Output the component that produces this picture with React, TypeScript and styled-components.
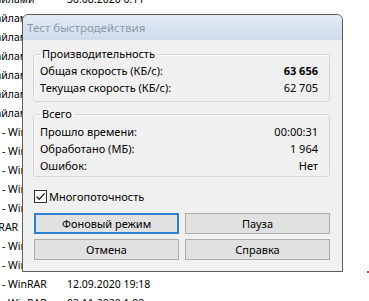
import React from "react";
import styled, { createGlobalStyle } from "styled-components";

const GlobalStyle = createGlobalStyle`
    html, body {
        margin: 0;
        padding: 0;
        background: #fff;
    }
    body {
        width: 369px;
        height: 301px;
        overflow: hidden;
    }
`;

const Desktop = styled.div`
    position: relative;
    width: 369px;
    height: 301px;
    overflow: hidden;
    background: #fff;
    font-family: "Noto Sans", "Segoe UI", sans-serif;
`;

const FileList = styled.div`
    margin-top: -10px;
    margin-left: -54px;
    font-size: 10.5px;
    line-height: 19px;
    color: #000;
`;

const FileRow = styled.div`
    display: grid;
    grid-template-columns: 121px auto;
    white-space: nowrap;
`;

const Mark = styled.span`
    position: absolute;
    left: 367px;
    top: 271px;
    width: 2px;
    height: 2px;
    background: #d04040;
`;

const Window = styled.div`
    position: absolute;
    left: 22px;
    top: 14px;
    width: 321px;
    height: 258px;
    box-sizing: border-box;
    border: 1px solid #5c5c5c;
    border-radius: 6px 6px 0 0;
    background: #f0f0f0;
    display: flex;
    flex-direction: column;
    overflow: hidden;
    font-size: 11px;
    color: #000;
`;

const TitleBar = styled.div`
    height: 25px;
    flex: none;
    padding-left: 4px;
    line-height: 26px;
    font-size: 11.5px;
    color: #8e9bab;
    background: linear-gradient(#e3ebf5, #ccdbeb);
    border-radius: 5px 5px 0 0;
`;

const Body = styled.div`
    flex: 1;
    display: flex;
    flex-direction: column;
    padding: 7px 12px 0 10px;
`;

const Group = styled.fieldset<{ $gap?: number; $pad?: number }>`
    margin: ${(p) => p.$gap || 0}px 0 0 0;
    padding: ${(p) => (p.$pad ?? 1)}px 11px ${(p) => (p.$pad ? 2 : 5)}px 6px;
    border: 1px solid #d6d6d6;
    border-radius: 3px;
    box-shadow: inset 1px 1px 0 #fbfbfb;
    min-width: 0;
`;

const Caption = styled.legend`
    padding: 0 2px;
    margin: 0;
    line-height: 14px;
`;

const StatRow = styled.div`
    display: flex;
    justify-content: space-between;
    line-height: 17px;
`;

const Value = styled.span<{ $bold?: boolean }>`
    font-weight: ${(p) => (p.$bold ? 700 : 400)};
`;

const CheckRow = styled.label`
    display: flex;
    align-items: center;
    gap: 2px;
    margin: 11px 0 0 1px;
    line-height: 17px;
`;

const CheckBox = styled.span`
    width: 13px;
    height: 13px;
    box-sizing: border-box;
    border: 1px solid #333;
    background: #fff;
    display: flex;
    align-items: center;
    justify-content: center;
`;

const Buttons = styled.div`
    display: grid;
    grid-template-columns: 1fr 1fr;
    gap: 5px 6px;
    margin: 8px 0 0 1px;
`;

const Button = styled.button<{ $focused?: boolean }>`
    height: 21px;
    padding: 0;
    font-family: inherit;
    font-size: 11px;
    color: #000;
    background: #e1e1e1;
    border: ${(p) => (p.$focused ? "2px solid #2f80d2" : "1px solid #adadad")};
    border-radius: 0;
`;

const files = [
    ["Папка с файлами", "30.08.2020 0:11"],
    ["Папка с файлами", "31.08.2020 14:02"],
    ["Папка с файлами", "01.09.2020 9:45"],
    ["Папка с файлами", "02.09.2020 18:30"],
    ["Папка с файлами", "03.09.2020 11:12"],
    ["Папка с файлами", "05.09.2020 20:05"],
    ["Папка с файлами", "06.09.2020 8:19"],
    ["Архив RAR - WinRAR", "07.09.2020 13:40"],
    ["Архив RAR - WinRAR", "08.09.2020 16:27"],
    ["Архив RAR - WinRAR", "08.09.2020 22:51"],
    ["Архив RAR - WinRAR", "09.09.2020 10:03"],
    ["Архив RAR - WinRAR", "10.09.2020 15:36"],
    ["Архив WinRAR", "10.09.2020 21:14"],
    ["Архив RAR - WinRAR", "11.09.2020 7:58"],
    ["Архив RAR - WinRAR", "11.09.2020 23:22"],
    ["Архив RAR - WinRAR", "12.09.2020 19:18"],
    ["Архив RAR - WinRAR", "03.11.2020 1:09"],
];

const App = () => (
    <Desktop>
        <GlobalStyle />
        <FileList>
            {files.map(([type, date], index) => (
                <FileRow key={index}>
                    <span>{type}</span>
                    <span>{date}</span>
                </FileRow>
            ))}
        </FileList>
        <Mark />
        <Window>
            <TitleBar>Тест быстродействия</TitleBar>
            <Body>
                <Group>
                    <Caption>Производительность</Caption>
                    <StatRow>
                        <span>Общая скорость (КБ/с):</span>
                        <Value $bold>63 656</Value>
                    </StatRow>
                    <StatRow>
                        <span>Текущая скорость (КБ/с):</span>
                        <Value>62 705</Value>
                    </StatRow>
                </Group>
                <Group $gap={5} $pad={2}>
                    <Caption>Всего</Caption>
                    <StatRow>
                        <span>Прошло времени:</span>
                        <Value>00:00:31</Value>
                    </StatRow>
                    <StatRow>
                        <span>Обработано (МБ):</span>
                        <Value>1 964</Value>
                    </StatRow>
                    <StatRow>
                        <span>Ошибок:</span>
                        <Value>Нет</Value>
                    </StatRow>
                </Group>
                <CheckRow>
                    <CheckBox>
                        <svg width="11" height="11" viewBox="0 0 11 11">
                            <path d="M1.5 5.5 L4.2 8.3 L9.6 2.4" fill="none" stroke="#222" strokeWidth="1.3" />
                        </svg>
                    </CheckBox>
                    Многопоточность
                </CheckRow>
                <Buttons>
                    <Button $focused>Фоновый режим</Button>
                    <Button>Пауза</Button>
                    <Button>Отмена</Button>
                    <Button>Справка</Button>
                </Buttons>
            </Body>
        </Window>
    </Desktop>
);

export default App;
